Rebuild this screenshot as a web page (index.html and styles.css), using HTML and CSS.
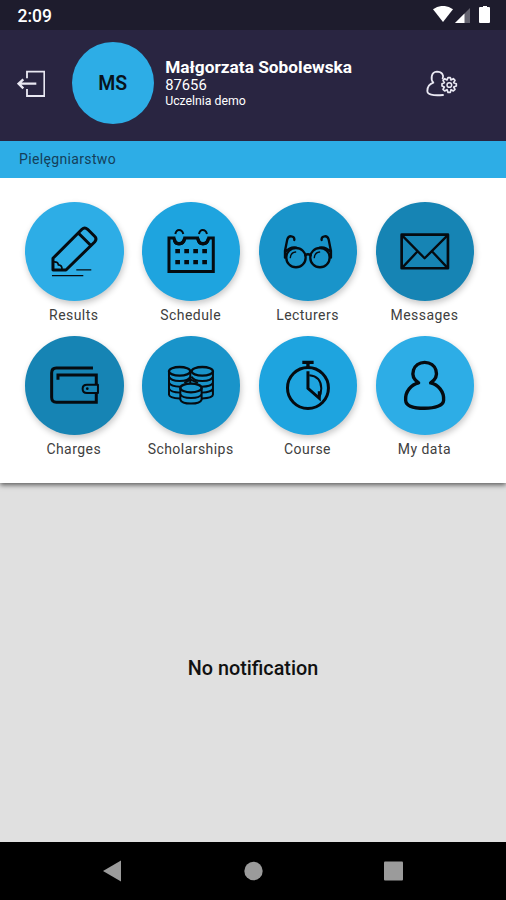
FILE: index.html
```html
<!DOCTYPE html>
<html lang="en">
<head>
<meta charset="utf-8">
<title>Student portal</title>
<link rel="stylesheet" href="styles.css">
</head>
<body>
<div class="screen">
  <div class="status">
    <span class="clock">2:09</span>
    <svg class="status-icons" viewBox="0 0 60 18" width="60" height="18">
      <path d="M0 3.2Q10-3.4 20 3.2L10 16Z" fill="#fff"/>
      <path d="M22 17L37 2V17Z" fill="#64636f"/><path d="M22 17L31.500 7.500V17Z" fill="#fff"/>
      <path d="M48 1h2V0h4v1h2q1 0 1 1v14q0 1-1 1h-9q-1 0-1-1V2q0-1 1-1Z" fill="#fff"/>
    </svg>
  </div>
  <header class="header">
    <svg class="exit" viewBox="48 208 86 82" width="28.67" height="27.33" fill="none" stroke="#e9e8f2" stroke-width="5.500">
      <path d="M78 233V213H130V286H78V265"/><path d="M106 249H56M67 236L53 249L67 263" stroke-width="7"/>
    </svg>
    <div class="avatar">MS</div>
    <div class="person">
      <div class="name">Małgorzata Sobolewska</div>
      <div class="number">87656</div>
      <div class="school">Uczelnia demo</div>
    </div>
    <svg class="account" viewBox="516 206 102 84" width="34" height="28" fill="none" stroke="#e9e8f2" stroke-width="5.500" stroke-linejoin="round" stroke-linecap="round">
      <path d="M570 284Q523 288 523 272Q523 253 541 247C533 239 533 215 552 214C568 214 573 226 569 234"/>
      <path d="M585 232h7l2 7 7-4 5 5-4 7 8 3v7l-8 3 4 7-5 5-7-4-2 8h-7l-3-8-7 4-5-5 4-7-7-3v-7l7-3-4-7 5-5 7 4Z" stroke-width="5"/>
      <circle cx="589" cy="254" r="7" stroke-width="4.500"/>
    </svg>
  </header>
  <div class="field">Pielęgniarstwo</div>
  <main class="menu">
    <div class="item"><div class="disc light">
      <svg viewBox="30 36 296 296" fill="none" stroke="#050b10" stroke-width="9" stroke-linejoin="round">
        <path d="M114 205L201 118Q209 110 218 118L239 139Q247 147 239 156L153 240H114ZM190 129L227 166"/><path d="M116 216Q130 215 130 225Q142 226 141 239" stroke-width="5"/><path d="M111 257H205M184 240H229" stroke-width="3.500"/>
      </svg></div><span>Results</span></div>
    <div class="item"><div class="disc mid">
      <svg viewBox="30 36 296 296" fill="none" stroke="#050b10" stroke-width="9">
        <path d="M111 245V144H126Q128 162 141 162Q155 162 158 144H197Q200 162 213 162Q226 162 230 144H244V245Z"/><path d="M127 146Q128 161 141 161Q155 161 158 146M198 146Q200 161 213 161Q227 161 229 146" stroke-width="10"/><path d="M130 132Q133 120 141 120Q151 120 154 132M201 132Q204 120 212 120Q222 120 225 132" stroke-width="6"/><path d="M130 183.500h96M130 216.500h96" stroke-width="13" stroke-dasharray="14 13"/>
      </svg></div><span>Schedule</span></div>
    <div class="item"><div class="disc deep">
      <svg viewBox="30 36 296 296" fill="none" stroke="#050b10" stroke-width="7" stroke-linecap="round">
        <circle cx="141" cy="203" r="29"/><circle cx="213" cy="203" r="29"/><path d="M169 196Q177 190 185 196M108 203V183L115 148Q118 138 127 139Q137 140 136 150M246 203V183L239 148Q236 138 227 139Q217 140 218 150M109 186Q124 170 141 173M245 186Q230 170 213 173"/><path d="M124 203Q126 187 140 186M196 203Q198 187 212 186" stroke-width="4"/>
      </svg></div><span>Lecturers</span></div>
    <div class="item"><div class="disc dark">
      <svg viewBox="30 36 296 296" fill="none" stroke="#050b10" stroke-width="8" stroke-linejoin="round">
        <path d="M107 134H246V235H107Z"/><path d="M109 137L176 205L244 137M109 233L155 184M244 233L198 184" stroke-width="7"/>
      </svg></div><span>Messages</span></div>
    <div class="item"><div class="disc dark">
      <svg viewBox="30 33 296 296" fill="none" stroke="#050b10" stroke-width="9">
        <path d="M234 129H124Q110 129 110 144V217Q110 232 124 232H244V204M129 164V150H244V178"/><path d="M249 179H216Q203 179 203 191Q203 204 216 204H249Z" stroke-width="6" stroke-linejoin="round"/><circle cx="217" cy="191" r="4" fill="#050b10" stroke="none"/>
      </svg></div><span>Charges</span></div>
    <div class="item"><div class="disc deep">
      <svg viewBox="30 33 296 296" fill="none" stroke="#050b10" stroke-width="7">
        <ellipse cx="143" cy="139" rx="32" ry="13"/><ellipse cx="211" cy="139" rx="32" ry="13"/><path d="M111 139V209Q112 219 144 221M243 139V209Q243 219 210 221M175 139V175M111 155Q116 168 143 168Q171 168 175 155M179 155Q184 168 211 168Q239 168 243 155M111 173Q116 185 145 185M243 173Q239 185 209 185M111 191Q116 202 144 203M243 191Q239 202 210 203" stroke-width="6"/><ellipse cx="177" cy="189" rx="32" ry="13"/><path d="M145 189V224Q149 236 177 236Q205 236 209 224V189M145 207Q149 219 177 219Q205 219 209 207" stroke-width="6"/><path d="M157 174L176 164L198 174" stroke-width="6"/>
      </svg></div><span>Scholarships</span></div>
    <div class="item"><div class="disc mid">
      <svg viewBox="30 33 296 296" fill="none" stroke="#050b10" stroke-width="9">
        <circle cx="177" cy="189" r="61.500"/><path d="M160 112H194M177 112V127" stroke-width="10"/><path d="M177 139V190L211 220V199" stroke-width="9"/><path d="M181 151Q216 154 217 190Q217 207 210 218" stroke-width="6"/>
      </svg></div><span>Course</span></div>
    <div class="item"><div class="disc light">
      <svg viewBox="30 33 296 296" fill="none" stroke="#050b10" stroke-width="10" stroke-linejoin="round">
        <path d="M158 174C127 153 142 112 176 112C211 112 225 153 194 174C216 179 235 199 233 226C232 242 207 250 176 250C145 250 120 243 119 226C117 199 136 179 158 174Z"/>
      </svg></div><span>My data</span></div>
  </main>
  <section class="notice">No notification</section>
  <nav class="nav">
    <svg viewBox="0 0 506 58" width="506" height="58" fill="#9b9b9b">
      <path d="M103 29L121 18.500V39.500Z"/><circle cx="253.500" cy="29" r="9.200"/><rect x="384" y="19.500" width="19" height="19" rx="1"/>
    </svg>
  </nav>
</div>
</body>
</html>
```
FILE: styles.css
```css
* { box-sizing: border-box; }
body { margin: 0; font-family: Roboto, sans-serif; color: #101820; }
svg { display: block; flex: none; }
.screen { width: 506px; height: 900px; display: flex; flex-direction: column; background: #e0e0e0; overflow: hidden; }
.status { height: 30px; background: #1e1c2d; display: flex; justify-content: space-between; align-items: center; padding: 0 10px 0 17.5px; }
.clock { color: #fff; font-size: 17.5px; font-weight: 500; line-height: 20px; padding-top: 2px; }
.status-icons { margin-right: 3px; }
.header { height: 110.5px; background: #292541; display: flex; align-items: center; padding: 0 47px 4px 16.5px; color: #fff; }
.avatar { width: 82px; height: 82px; margin-left: 26.5px; border-radius: 50%; background: #2dade6; color: #08131c; display: flex; align-items: center; justify-content: center; font-size: 19.5px; font-weight: 600; }
.person { margin-left: 11.5px; flex: 1; white-space: nowrap; }
.name { font-size: 17.3px; line-height: 19px; font-weight: 700; }
.number { font-size: 14.8px; line-height: 17px; }
.school { font-size: 12.3px; line-height: 14px; }
.field { height: 37.5px; background: #2dade6; padding-left: 19px; font-size: 14px; line-height: 37px; color: #14405a; letter-spacing: .35px; position: relative; z-index: 1; }
.menu { height: 304.5px; background: #fff; display: grid; grid-template-columns: repeat(4, 116.9px); grid-auto-rows: 134px; padding: 24px 0 0 15.8px; box-shadow: 0 2px 5px rgba(0,0,0,.6); }
.item { display: flex; flex-direction: column; align-items: center; font-size: 14px; line-height: 20px; color: #404040; letter-spacing: .45px; }
.item span { margin: 4px 1px 0 0; }
.disc { width: 98.6px; height: 98.6px; border-radius: 50%; box-shadow: 1px 3px 6px rgba(0,0,0,.22); }
.disc svg { width: 100%; height: 100%; }
.light { background: #2dade6; }
.mid { background: #1ea4df; }
.deep { background: #1994ca; }
.dark { background: #1684b4; }
.notice { flex: 1; display: flex; align-items: center; justify-content: center; padding-top: 13px; font-size: 19.8px; font-weight: 500; color: #111; }
.nav { height: 58.5px; background: #000; }
```
